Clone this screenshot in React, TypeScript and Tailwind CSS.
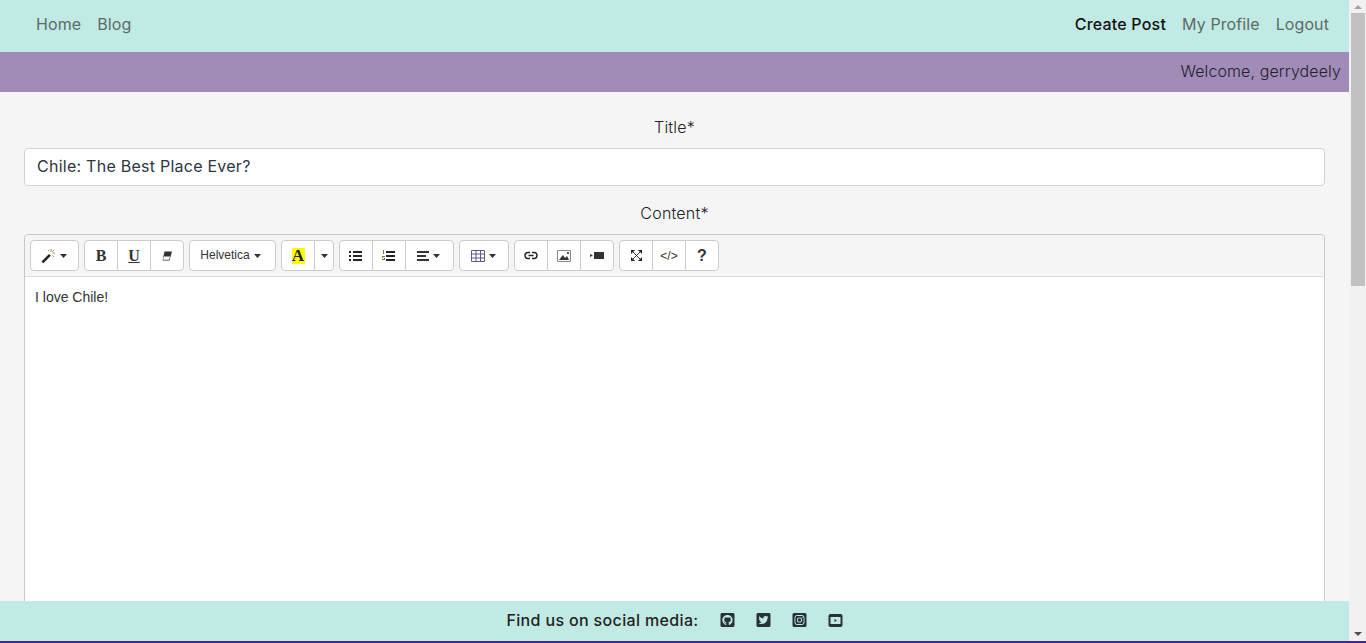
import React from "react";
import { FaGithubSquare, FaTwitterSquare, FaInstagramSquare } from "react-icons/fa";

const wf = { fontFamily: '"Inter","Open Sans",sans-serif' };
const ar = { fontFamily: '"Liberation Sans",Arial,sans-serif' };
const serif = { fontFamily: '"Liberation Serif",serif' };

const Caret = () => (
  <svg width="7" height="4" viewBox="0 0 7 4" className="shrink-0"><path d="M0 0h7L3.5 4z" fill="#333" /></svg>
);

const Btn = ({ w, children, last, cls = "" }: { w: string; children: React.ReactNode; last?: boolean; cls?: string }) => (
  <div className={`${w} ${cls} h-full flex items-center justify-center gap-1 ${last ? "" : "border-r border-[#ccc]"}`}>{children}</div>
);

const Group = ({ children }: { children: React.ReactNode }) => (
  <div className="flex h-[31px] bg-white border border-[#ccc] rounded-[4px] text-[#333]">{children}</div>
);

const I = ({ children, w = 16, h = 16 }: { children: React.ReactNode; w?: number; h?: number }) => (
  <svg width={w} height={h} viewBox={`0 0 ${w} ${h}`} fill="none" className="shrink-0">{children}</svg>
);

export default function App() {
  return (
    <div className="h-[643px] w-[1366px] overflow-hidden flex flex-col bg-[#f5f5f5]" style={wf}>
      <div className="flex-1 min-h-0 flex">
        <div className="flex-1 min-w-0 flex flex-col">
          <nav className="h-[52px] shrink-0 bg-[#c1eae5] flex items-center justify-between pl-[36px] pr-[20px] pb-[4px] text-[16px] tracking-[0.1px] text-[#5c6b68]">
            <div className="flex gap-[16px]"><span>Home</span><span>Blog</span></div>
            <div className="flex gap-[16px]"><span className="text-[#111] font-medium tracking-[0.2px]">Create Post</span><span>My Profile</span><span>Logout</span></div>
          </nav>
          <div className="h-[40px] shrink-0 bg-[#a18cb8] flex items-center justify-end pr-[8px] pb-[2px] text-[16px] font-light tracking-[0.1px] text-[#231c2e]">Welcome, gerrydeely</div>
          <main className="flex-1 min-h-0 overflow-hidden px-[24px]">
            <div className="text-center text-[16px] leading-[24px] font-light tracking-[0.2px] text-[#222] mt-[23px] mb-[9px]">Title*</div>
            <div className="h-[38px] bg-white border border-[#ced4da] rounded-[4px] flex items-center px-[12px] pb-[2px] text-[16px] text-[#2f3542] tracking-[0.25px]">Chile: The Best Place Ever?</div>
            <div className="text-center text-[16px] leading-[24px] font-light tracking-[0.2px] text-[#222] mt-[15px] mb-[9px]">Content*</div>
            <div className="border border-[#c8c8c8] rounded-[4px] h-[500px] bg-white" style={ar}>
              <div className="h-[42px] bg-[#f5f5f5] border-b border-[#ddd] rounded-t-[4px] flex gap-[5px] pl-[5px] pt-[5px]">
                <Group>
                  <Btn w="w-[47px]" last cls="pr-[3px]">
                    <I>
                      <path d="M1.500 13.500 L9 6 L10.800 7.800 L3.300 15.300z" fill="#222" />
                      <path d="M11 1v3M15 5h-2.500M14 9l-1.500-1.500M8 2l1 1M14 2l-1.500 1.500" stroke="#a58a5a" strokeWidth="1" />
                    </I>
                    <Caret />
                  </Btn>
                </Group>
                <Group>
                  <Btn w="w-[33px]"><span className="font-bold text-[16px] text-[#333]" style={serif}>B</span></Btn>
                  <Btn w="w-[33px]"><span className="font-bold text-[16px] underline text-[#333]" style={serif}>U</span></Btn>
                  <Btn w="w-[32px]" last>
                    <I w={12} h={12}><path d="M3.500 1.500H11L8.500 10.500H1.500z" fill="#333" /><path d="M2.800 6.500h6.200l-1 3.300H2z" fill="#fff" /></I>
                  </Btn>
                </Group>
                <Group>
                  <Btn w="w-[85px]" last cls="pr-[4px]"><span className="text-[12px] text-[#333] -mt-[2px]">Helvetica</span><Caret /></Btn>
                </Group>
                <Group>
                  <Btn w="w-[33px]">
                    <span className="w-[13px] h-[16px] bg-[#ffff00] flex items-center justify-center font-bold text-[17px] text-[#222]" style={serif}>A</span>
                  </Btn>
                  <Btn w="w-[18px]" last><Caret /></Btn>
                </Group>
                <Group>
                  <Btn w="w-[33px]" cls="pr-[1px]">
                    <I w={13} h={11}><path d="M0 1h2v2H0zM0 5h2v2H0zM0 9h2v2H0zM4 1h9v2H4zM4 5h9v2H4zM4 9h9v2H4z" fill="#222" /></I>
                  </Btn>
                  <Btn w="w-[33px]" cls="pr-[1px]">
                    <I w={13} h={11}><path d="M4 1h9v2H4zM4 5h9v2H4zM4 9h9v2H4z" fill="#222" /><path d="M1 0h1v4H1zM0 6h3v1H1v1h2v2H0V9h2V8H0z" fill="#8a6d3b" /></I>
                  </Btn>
                  <Btn w="w-[47px]" last cls="pr-[2px]">
                    <I w={12} h={10}><path d="M0 0h12v2H0zM0 4h9v2H0zM0 8h12v2H0z" fill="#333" /></I>
                    <Caret />
                  </Btn>
                </Group>
                <Group>
                  <Btn w="w-[48px]" last cls="pr-[1px]">
                    <I w={14} h={12}>
                      <path d="M.5.5h13v11H.5zM5 .5v11M9.500.5v11M.5 4h13M.5 8h13" stroke="#5a5a8a" strokeWidth="1" />
                    </I>
                    <Caret />
                  </Btn>
                </Group>
                <Group>
                  <Btn w="w-[33px]">
                    <I w={14} h={9}><path d="M6 1.500H4a3 3 0 0 0 0 6h2M8 1.500h2a3 3 0 0 1 0 6H8M4.500 4.500h5" stroke="#222" strokeWidth="1.400" /></I>
                  </Btn>
                  <Btn w="w-[33px]">
                    <I w={14} h={12}>
                      <path d="M.5 .5h13v11H.5z" stroke="#888" />
                      <path d="M2 10 L6 5 L8 8 L10 6 L12 10z" fill="#333" />
                      <path d="M10 2h2v2h-2z" fill="#555" />
                    </I>
                  </Btn>
                  <Btn w="w-[32px]" last>
                    <I w={14} h={9}><path d="M4 1h10v7H4zM0 3l3 1.500L0 6z" fill="#333" /></I>
                  </Btn>
                </Group>
                <Group>
                  <Btn w="w-[33px]">
                    <I w={11} h={11}><path d="M0 0h3.500L0 3.500zM11 0H7.500L11 3.500zM0 11h3.500L0 7.500zM11 11H7.500L11 7.500zM2 2l7 7M9 2l-7 7" fill="#222" stroke="#222" strokeWidth="0.9" /></I>
                  </Btn>
                  <Btn w="w-[33px]"><span className="text-[12px] text-[#333]">&lt;/&gt;</span></Btn>
                  <Btn w="w-[32px]" last><span className="text-[16px] font-bold text-[#333]">?</span></Btn>
                </Group>
              </div>
              <div className="px-[10px] pt-[10px] text-[14px] leading-[20px] text-[#333]">I love Chile!</div>
            </div>
          </main>
        </div>
        <div className="w-[17px] shrink-0 bg-[#f1f1f1] flex flex-col items-center">
          <div className="h-[13px] flex items-center justify-center"><svg width="8" height="4" viewBox="0 0 8 4"><path d="M4 0l4 4H0z" fill="#a3a3a3" /></svg></div>
          <div className="w-[14px] h-[273px] bg-[#c1c1c1]" />
          <div className="flex-1" />
        </div>
      </div>
      <div className="h-[42px] shrink-0 flex flex-col">
        <div className="flex-1 flex">
          <div className="flex-1 bg-[#c1eae5] flex items-center justify-center pb-[2px] text-[16px] font-medium tracking-[0.35px] text-[#222]">
            <span className="mr-[21px]">Find us on social media:</span>
            <div className="flex gap-[21px] text-[#263238] items-center">
              <FaGithubSquare size={16} className="w-[15px]" />
              <FaTwitterSquare size={16} className="w-[15px]" />
              <FaInstagramSquare size={16} className="w-[15px]" />
              <svg width="15" height="15" viewBox="0 0 15 15">
                <rect x="0.5" y="1" width="14" height="13" rx="2" fill="#263238" />
                <path d="M2.500 4h10v7h-10zM6.500 6v3l2.500-1.500z" fill="#c1eae5" fillRule="evenodd" />
              </svg>
            </div>
          </div>
          <div className="w-[17px] bg-[#f1f1f1] flex items-end justify-center pb-[5px]"><svg width="8" height="4" viewBox="0 0 8 4"><path d="M0 0h8L4 4z" fill="#505050" /></svg></div>
        </div>
        <div className="h-[2px] bg-[#3f2a8c]" />
      </div>
    </div>
  );
}
